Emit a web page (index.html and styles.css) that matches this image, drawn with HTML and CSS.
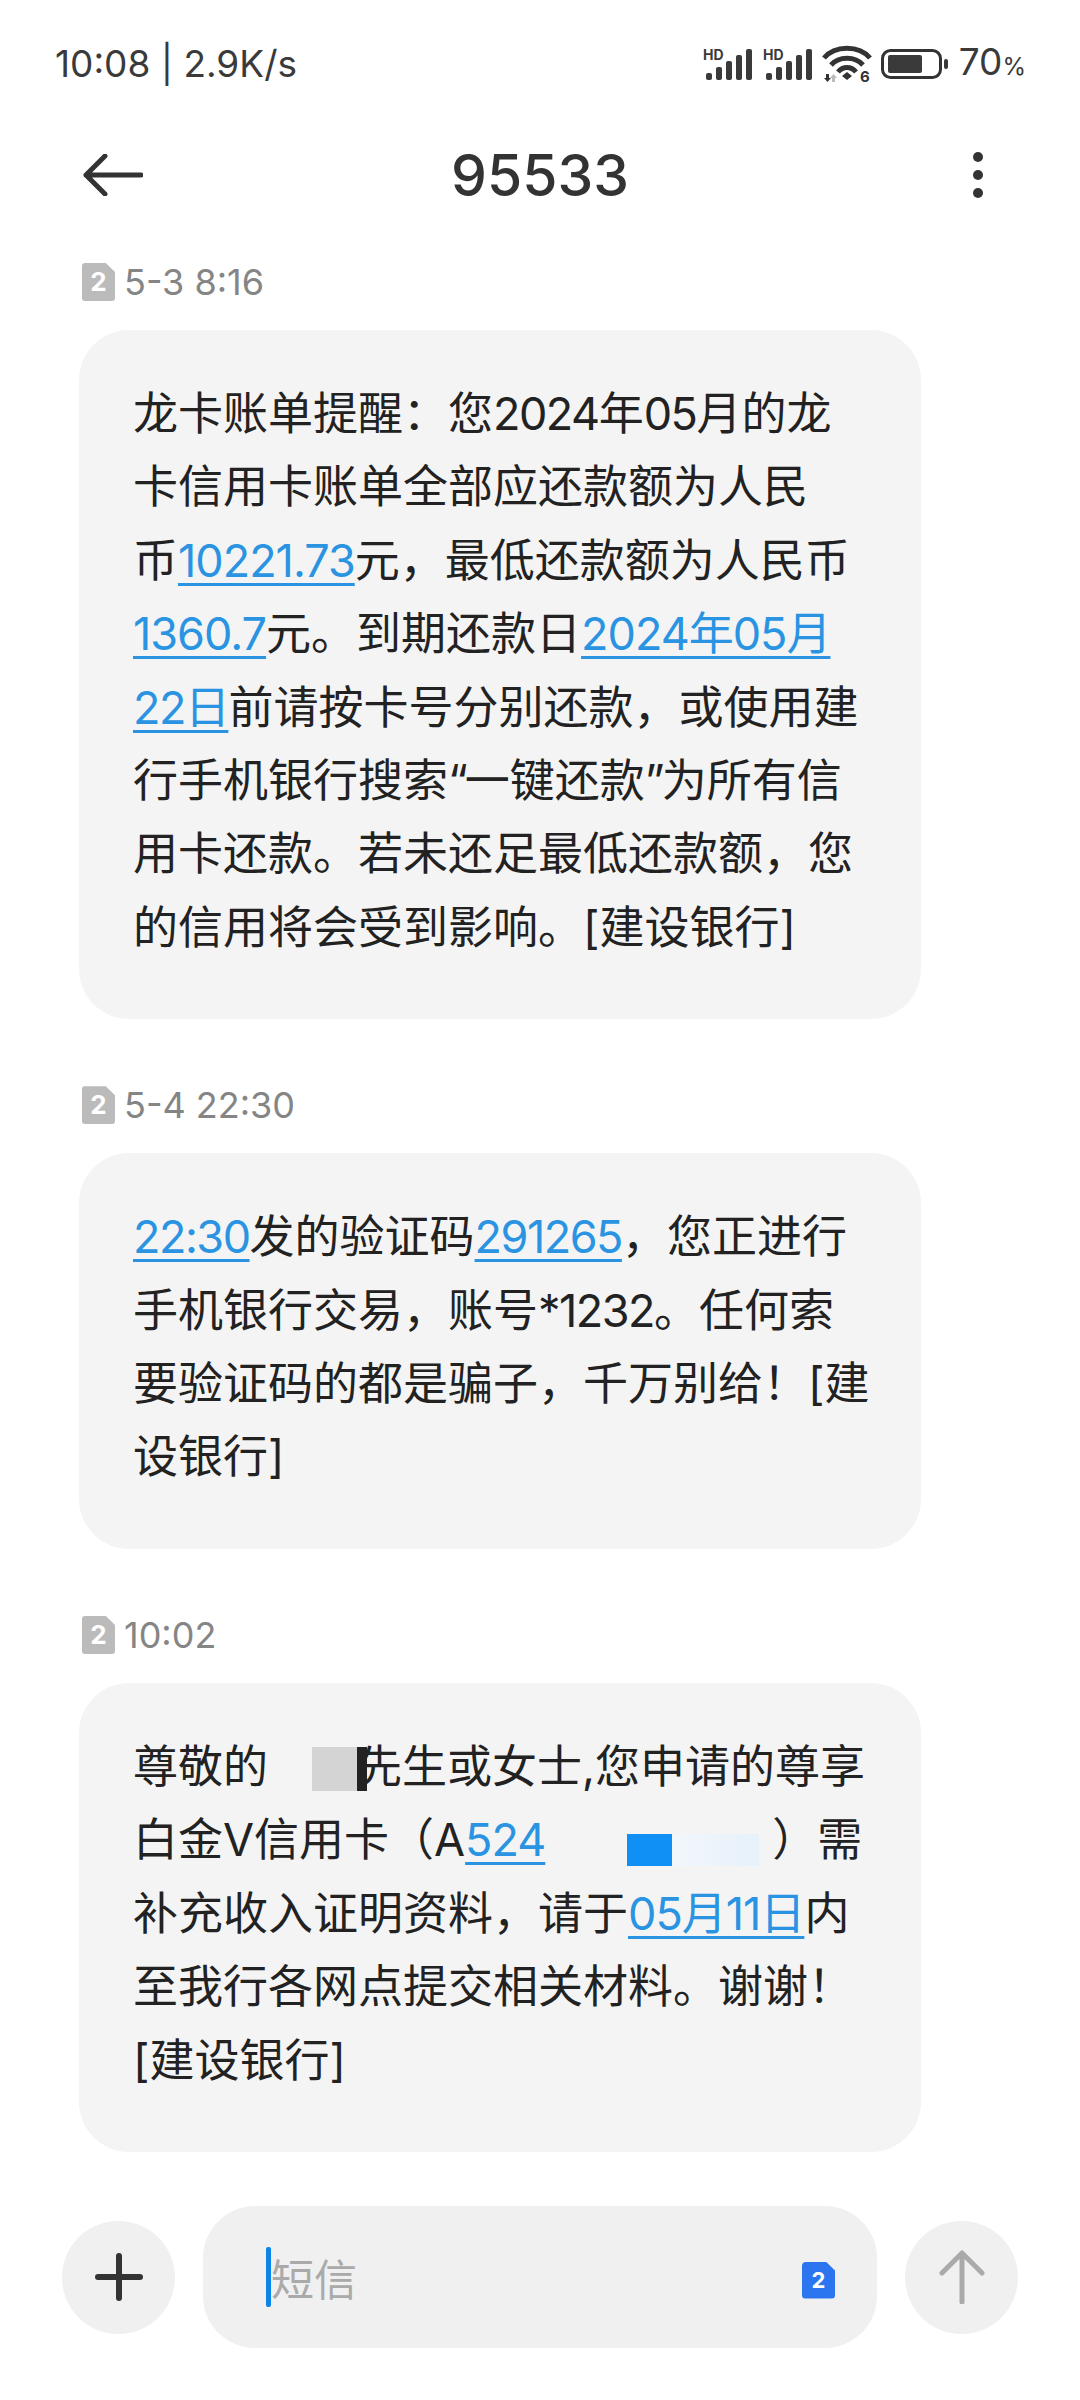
FILE: index.html
```html
<!DOCTYPE html>
<html lang="zh-CN">
<head>
  <meta charset="UTF-8">
  <meta name="viewport" content="width=device-width, initial-scale=1.0">
  <title>95533</title>
  <link rel="stylesheet" href="styles.css">
</head>
<body>

  <div class="phone">
    <!-- status bar -->
    <div class="status-bar">
      <span class="status-time">10:08 | 2.9K/s</span>
      <div class="status-icons">
        <svg class="icon-signal" width="50" height="34" viewBox="0 0 50 34">
          <text x="0" y="13" class="hd-label">HD</text>
          <rect x="3" y="26" width="6" height="7" rx="2"/><rect x="13" y="20" width="6" height="13" rx="2"/><rect x="23" y="14" width="6" height="19" rx="2"/><rect x="33" y="8" width="6" height="25" rx="2"/><rect x="43" y="2" width="6" height="31" rx="2"/>
        </svg>
        <svg class="icon-signal" width="50" height="34" viewBox="0 0 50 34">
          <text x="0" y="13" class="hd-label">HD</text>
          <rect x="3" y="26" width="6" height="7" rx="2"/><rect x="13" y="20" width="6" height="13" rx="2"/><rect x="23" y="14" width="6" height="19" rx="2"/><rect x="33" y="8" width="6" height="25" rx="2"/><rect x="43" y="2" width="6" height="31" rx="2"/>
        </svg>
        <svg class="icon-wifi" width="48" height="38" viewBox="0 0 48 38">
          <path d="M1 13C12 0 36 0 47 13"/><path d="M8 20C16 11 32 11 40 20"/><path d="M15 27C20 21 28 21 33 27"/>
          <path class="fill" d="M24 27l5 4-5 4-5-4z"/>
          <path class="fill" d="M3 29h3v4h2l-3.500 4-3.500-4h2z"/>
          <path class="fill faint" d="M12 37h-3v-4h-2l3.500-4 3.500 4h-2z"/>
          <text x="37" y="37" class="six-label">6</text>
        </svg>
        <svg class="icon-battery" width="68" height="30" viewBox="0 0 68 30">
          <rect x="1.500" y="1.500" width="58" height="27" rx="8" fill="none" stroke="#333" stroke-width="3"/>
          <rect x="7" y="6" width="34" height="18" rx="2" fill="#3a3a3a"/>
          <rect x="63" y="10" width="4" height="10" rx="2" fill="#3a3a3a"/>
        </svg>
        <span class="status-battery">70<small>%</small></span>
      </div>
    </div>

    <!-- header -->
    <div class="title-bar">
      <svg class="back-icon" width="60" height="42" viewBox="0 0 60 42">
        <path d="M58 21H3M22 2L3 21l19 19"/>
      </svg>
      <h1>95533</h1>
      <div class="more-icon"><i></i><i></i><i></i></div>
    </div>

    <div class="messages">
      <div class="msg">
        <div class="msg-time"><span class="sim-badge">2</span>5-3 8:16</div>
        <div class="bubble">龙卡账单提醒：您<span class="num">2024</span>年<span class="num">05</span>月的龙<br>卡信用卡账单全部应还款额为人民<br>币<a>10221.73</a>元，最低还款额为人民币<br><a>1360.7</a>元。到期还款日<a>2024年05月</a><br><a class="num">22日</a>前请按卡号分别还款，或使用建<br>行手机银行搜索<span class="quote">“</span>一键还款<span class="quote">”</span>为所有信<br>用卡还款。若未还足最低还款额，您<br>的信用将会受到影响。[建设银行]</div>
      </div>

      <div class="msg">
        <div class="msg-time"><span class="sim-badge">2</span>5-4 22:30</div>
        <div class="bubble"><a class="num">22:30</a>发的验证码<a class="num">291265</a>，您正进行<br>手机银行交易，账号<span class="num">*1232</span>。任何索<br>要验证码的都是骗子，千万别给！[建<br>设银行]</div>
      </div>

      <div class="msg">
        <div class="msg-time"><span class="sim-badge">2</span>10:02</div>
        <div class="bubble">尊敬的<span class="blur-name"><i></i><b></b></span>先生或女士,您申请的尊享<br>白金V信用卡（A<a>524</a><span class="blur-card"><i></i><b></b></span>）需<br>补充收入证明资料，请于<a>05月11日</a>内<br>至我行各网点提交相关材料。谢谢！<br>[建设银行]</div>
      </div>
    </div>

    <!-- composer -->
    <div class="composer">
      <div class="round-btn">
        <svg width="48" height="48" viewBox="0 0 48 48"><path d="M24 3v42M3 24h42" stroke="#333" stroke-width="6" stroke-linecap="round" fill="none"/></svg>
      </div>
      <div class="input-box">
        <span class="caret"></span>
        <span class="placeholder">短信</span>
        <span class="sim-blue">2</span>
      </div>
      <div class="round-btn">
        <svg width="46" height="54" viewBox="0 0 46 54"><path d="M23 52V3M3 23L23 3l20 20" stroke="#aaa" stroke-width="5" stroke-linecap="round" stroke-linejoin="round" fill="none"/></svg>
      </div>
    </div>
  </div>

</body>
</html>
```

FILE: styles.css
```css
* {
  box-sizing: border-box;
}

body {
  margin: 0;
  background-color: #FFF;
  font-family: Inter, "Noto Sans CJK SC", sans-serif;
  color: #222;
}

.phone {
  width: 1080px;
  height: 2400px;
  display: flex;
  flex-direction: column;
}

.status-bar {
  flex-shrink: 0;
  height: 124px;
  padding: 42px 54px 0 55px;
  display: flex;
  justify-content: space-between;
  align-items: flex-start;
  color: #3a3a3a;
}

.status-time {
  font-size: 37px;
  line-height: 44px;
}

.status-icons {
  display: flex;
  align-items: center;
  height: 44px;
  gap: 10px;
}

.icon-signal {
  fill: #3a3a3a;
}

.hd-label {
  font-size: 14px;
  font-weight: 700;
}

.icon-wifi {
  overflow: visible;
}

.icon-wifi path {
  fill: none;
  stroke: #333;
  stroke-width: 5;
}

.icon-wifi .fill {
  fill: #333;
  stroke: none;
}

.icon-wifi .faint {
  fill: #BBB;
}

.six-label {
  font-size: 15px;
  font-weight: 700;
  fill: #333;
}

.status-battery {
  font-size: 37px;
  line-height: 44px;
}

.status-battery small {
  font-size: 24px;
}

.title-bar {
  flex-shrink: 0;
  height: 102px;
  padding: 0 83px;
  display: grid;
  grid-template-columns: 1fr auto 1fr;
  align-items: center;
}

.back-icon {
  fill: none;
  stroke: #333;
  stroke-width: 5;
  stroke-linecap: round;
  stroke-linejoin: round;
}

h1 {
  margin: 0;
  font-size: 57px;
  font-weight: 500;
  color: #333;
}

.more-icon {
  width: 10px;
  margin-right: 14px;
  display: flex;
  flex-direction: column;
  gap: 8px;
  justify-self: end;
}

.more-icon i {
  display: block;
  width: 10px;
  height: 10px;
  border-radius: 50%;
  background-color: #333;
}

.messages {
  flex: 1;
  min-height: 0;
  padding: 0 159px 0 79px;
  margin-top: 37px;
}

.msg {
  margin-bottom: 67px;
}

.msg:last-child {
  margin-bottom: 0;
}

.msg-time {
  display: flex;
  align-items: center;
  height: 38px;
  margin-bottom: 29px;
  padding-left: 3px;
  font-size: 36px;
  color: #858585;
}

.sim-badge {
  width: 33px;
  height: 38px;
  margin-right: 9px;
  background-color: #BBB;
  color: #FFF;
  font-size: 26px;
  font-weight: 700;
  text-align: center;
  line-height: 38px;
  border-radius: 3px;
  clip-path: polygon(0 0, 72% 0, 100% 24%, 100% 100%, 0 100%);
}

.bubble {
  background-color: #F4F4F4;
  border-radius: 50px;
  padding: 47px 20px 55px 54px;
  font-size: 45px;
  line-height: 73.4px;
  color: #222;
  white-space: nowrap;
}

.bubble a {
  color: #2A94E2;
  letter-spacing: -1px;
  text-decoration: underline;
  text-underline-offset: 6px;
  text-decoration-thickness: 3px;
}

.bubble .num {
  letter-spacing: -1.5px;
}

.quote {
  letter-spacing: -3px;
}

.blur-name {
  display: inline-flex;
  justify-content: flex-end;
  vertical-align: -8px;
  width: 89px;
  height: 44px;
}

.blur-name i {
  display: block;
  width: 45px;
  height: 44px;
  background-color: #D4D4D4;
}

/* dark sliver of the blur, sits on top of the next character */
.blur-name b {
  display: block;
  position: relative;
  width: 10px;
  height: 44px;
  margin-right: -10px;
  background-color: #222;
}

.blur-card {
  display: inline-flex;
  vertical-align: -10px;
  width: 227px;
  height: 32px;
  padding-left: 82px;
}

.blur-card i {
  display: block;
  width: 45px;
  height: 32px;
  background-color: #1090F5;
}

.blur-card b {
  display: block;
  width: 87px;
  height: 32px;
  background: linear-gradient(90deg, #F2F7FB, #E6F1FA);
}

.composer {
  flex-shrink: 0;
  height: 194px;
  padding: 0 62px 52px 62px;
  display: flex;
  justify-content: space-between;
  align-items: center;
}

.round-btn {
  width: 113px;
  height: 113px;
  border-radius: 50%;
  background-color: #F0F0F0;
  display: flex;
  align-items: center;
  justify-content: center;
}

.input-box {
  width: 674px;
  height: 142px;
  border-radius: 52px;
  background-color: #F0F0F0;
  display: flex;
  align-items: center;
  padding: 0 42px 0 63px;
}

.caret {
  width: 5px;
  height: 60px;
  background-color: #0A84E8;
  border-radius: 2px;
}

.placeholder {
  flex: 1;
  font-size: 43px;
  color: #AAA;
}

.sim-blue {
  width: 33px;
  height: 37px;
  margin-top: 6px;
  background-color: #2B76F0;
  color: #FFF;
  font-size: 22px;
  font-weight: 700;
  line-height: 37px;
  text-align: center;
  border-radius: 4px;
  clip-path: polygon(0 0, 72% 0, 100% 24%, 100% 100%, 0 100%);
}
```
